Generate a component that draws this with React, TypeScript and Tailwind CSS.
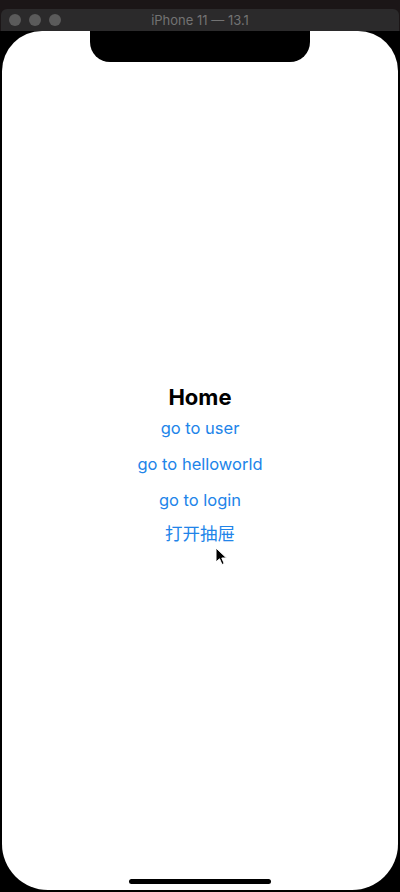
import React from "react";

export default function App() {
  const font = { fontFamily: "Inter, 'Noto Sans CJK SC', sans-serif" };
  return (
    <div className="w-[400px] h-[892px] bg-[#1b1617] flex flex-col overflow-hidden" style={font}>
      <div className="h-[9px] shrink-0" />
      {/* window title bar */}
      <div className="relative mx-px h-[22px] shrink-0 bg-[#2b2a2b] rounded-t-[6px] flex items-center justify-center">
        <div className="absolute left-[8px] top-[5px] flex gap-[8px]">
          <div className="w-[12px] h-[12px] rounded-full bg-[#5b5b5b]" />
          <div className="w-[12px] h-[12px] rounded-full bg-[#5b5b5b]" />
          <div className="w-[12px] h-[12px] rounded-full bg-[#5b5b5b]" />
        </div>
        <span className="text-[13px] text-[#737373] leading-none" style={{ fontFamily: "Inter, 'Liberation Sans', sans-serif" }}>
          iPhone 11 — 13.1
        </span>
      </div>
      {/* device body */}
      <div className="relative flex-1 bg-black px-[2px] pb-[2px] flex">
        <div className="relative flex-1 bg-white rounded-t-[40px] rounded-b-[46px] flex flex-col items-center justify-center pt-[8px]">
          <div className="text-[22px] font-bold text-black leading-[26px] mb-[6px]">Home</div>
          <div className="text-[16.5px] text-[#2184e9] leading-[24px] h-[36px]">go to user</div>
          <div className="text-[16.5px] text-[#2184e9] leading-[24px] h-[36px]">go to helloworld</div>
          <div className="text-[16.5px] text-[#2184e9] leading-[24px] h-[34px]">go to login</div>
          <div className="text-[17.5px] text-[#2184e9] leading-[24px] h-[24px]">打开抽屉</div>
          {/* cursor */}
          <svg className="absolute left-[213px] top-[516px]" width="13" height="19" viewBox="0 0 13 19">
            <path d="M1 1 L1 15 L4.5 11.8 L7 17.5 L9.2 16.5 L6.8 11 L11.5 11 Z" fill="#000" stroke="#fff" strokeWidth="1" />
          </svg>
        </div>
        {/* notch */}
        <div className="absolute left-[90px] top-0 w-[220px] h-[31px] bg-black rounded-b-[20px]" />
        {/* home indicator */}
        <div className="absolute left-[129px] bottom-[8px] w-[142px] h-[5px] rounded-full bg-black" />
      </div>
    </div>
  );
}
